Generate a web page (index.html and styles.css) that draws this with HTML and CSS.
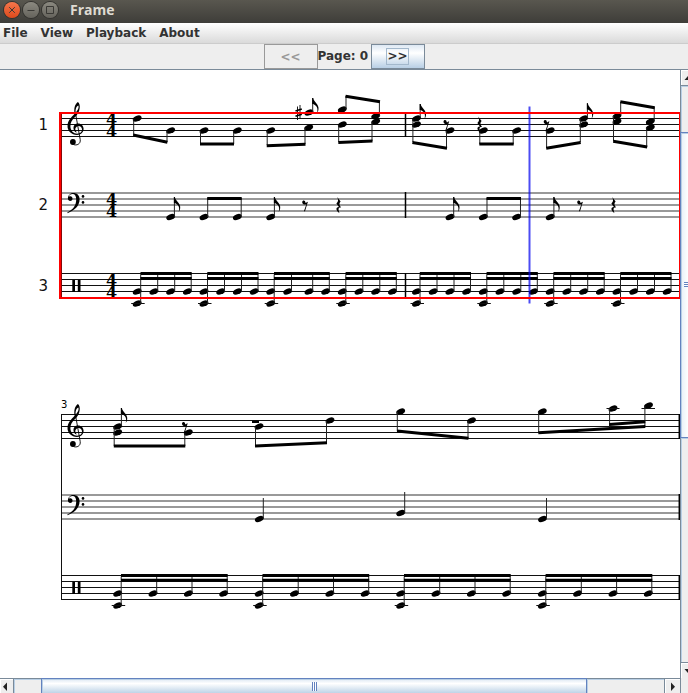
FILE: index.html
```html
<!DOCTYPE html>
<html lang="en">
<head>
<meta charset="utf-8">
<title>Frame</title>
<link rel="stylesheet" href="styles.css">
</head>
<body>
<header class="titlebar">
  <button class="win win-close" aria-label="Close"><svg viewBox="0 0 16 16"><path d="M5.200 5.200l5.600 5.600M10.800 5.200l-5.600 5.600"/></svg></button>
  <button class="win" aria-label="Minimize"><svg viewBox="0 0 16 16"><path d="M4.500 8.500h7"/></svg></button>
  <button class="win" aria-label="Maximize"><svg viewBox="0 0 16 16"><path d="M4.500 4.500h7v7h-7z"/></svg></button>
  <h1 class="title">Frame</h1>
</header>
<nav class="menubar">
  <button class="menu">File</button>
  <button class="menu">View</button>
  <button class="menu">Playback</button>
  <button class="menu">About</button>
</nav>
<div class="toolbar">
  <button class="page-btn" disabled>&lt;&lt;</button>
  <span class="page-label">Page: 0</span>
  <button class="page-btn page-btn-active"><span class="focus">&gt;&gt;</span></button>
</div>
<main class="scrollpane">
  <div class="viewport">
    <svg class="score" viewBox="0 70 680 608" width="680" height="608" role="img" aria-label="Score">
      <defs>
        <ellipse id="n" rx="4.600" ry="2.800" transform="rotate(-22)"/>
        <path id="flag" d="M-.5 0H.5C1 4 6.500 6.500 5.800 11C5.600 12.800 5.200 13.800 4.300 14.800C5.600 10.500 4 7.500 .5 6H-.5z"/>
        <path id="r8" d="M4.600 2.200L5.900 1.800L3 11.300L1.900 11.300L4.400 4.300C3.200 4.900 .2 4.800 .2 2.300C.2 -.2 3.600 -.1 3.300 2.600C4 3 4.400 2.800 4.600 2.200z"/>
        <path id="r4" d="M1.200 0L4.600 4.600C3 6.500 3 7.700 5 10.600C3 10 1.900 11 2.900 14.200L3.400 15.900C.2 14 -1 10 2.900 9.900L.4 6.500C2.500 4.500 2.400 3 1.200 0z"/>
        <g id="sharp" stroke="#000" fill="none">
          <path d="M2 1.500V15M4.500 0V13.500" stroke-width=".9"/>
          <path d="M0 6L6.300 4M0 11.300L6.300 9.300" stroke-width="1.700"/>
        </g>
        <g id="treble">
          <path d="M10.900 0C12.400 1.200 13 3.500 12.700 6C12.300 10.500 10 13 7.500 15.600C5 18.200 3.300 20.600 3.400 24.500C3.500 29 7 32.200 11.300 31.600C14 31.200 15.300 29 15 27C14.600 24.800 12.600 23.800 10.800 24.200C8.200 24.800 7.400 28 9.700 30L9.300 30.500C5.500 28.800 5.400 22.500 10 21.500C13.500 20.800 16.500 23.200 16.600 26.700C16.700 30.400 13.600 32.900 10 32.900C4.500 32.900 .3 29 .5 23.800C.7 18.800 4 15.600 7.600 11.800C6.800 7 7.500 2.500 10.900 0zM11.300 3.400C9.200 4.200 8.300 7.500 8.700 10.300C10.600 8.500 12.300 5.500 11.300 3.400z" fill-rule="evenodd"/>
          <path d="M8.300 10L13.200 37.500C14 42 9.500 44 6.300 42.400" fill="none" stroke="#000" stroke-width=".9"/>
          <circle cx="5.900" cy="40" r="2.900"/>
        </g>
        <g id="bass">
          <path d="M.9 5.500C.9 -1.800 12.600 -2 12.600 6.300C12.600 13 7.500 17.500 .5 20.200L.3 19.600C6 16.500 9.200 12.500 9.200 6.800C9.200 2.800 8 .9 5.600 .9C3.600 .9 2 2 1.700 3.700C4 2.600 5.600 3.800 5.500 5.700C5.300 8.800 .9 8.700 .9 5.500z"/>
          <circle cx="16" cy="3.400" r="1.300"/><circle cx="16" cy="9.400" r="1.300"/>
        </g>
        <path id="perc" d="M0 0h2.700v12h-2.700zM5.500 0h2.700v12h-2.700z"/>
        <g id="time" class="time"><text x="0" y="0">4</text><text x="0" y="12">4</text></g>
        <g id="staff"><path class="line" d="M61 .5H680M61 6.500H680M61 12.500H680M61 18.500H680M61 24.500H680"/></g>
        <g id="staff-soft"><path class="line-soft" d="M61 0H680M61 6H680M61 12H680M61 18H680M61 24H680"/></g>
        <g id="kick"><use href="#n"/><use href="#n" y="12"/><path class="line" d="M-6 12H7.500"/><path class="stem" d="M3.500 -17V12"/></g>
        <g id="drum4">
          <use href="#kick"/><use href="#n" x="16.700"/><use href="#n" x="33.400"/><use href="#n" x="50.200"/>
          <path class="stem" d="M20.500 -17V0M37.500 -17V0M54 -17V0"/>
          <path class="beam" d="M3.300 -18H54.500M3.300 -13H54.500"/>
        </g>
        <g id="drum4-wide">
          <use href="#kick"/><use href="#n" x="35.300"/><use href="#n" x="70.700"/><use href="#n" x="106"/>
          <path class="stem" d="M39 -17V0M74.300 -17V0M109.500 -17V0"/>
          <path class="beam" d="M3.300 -18H110M3.300 -13.300H110"/>
        </g>
        <g id="e8"><use href="#n"/><path class="stem" d="M3.700 -20V0"/><use href="#flag" x="3.700" y="-20"/></g>
        <g id="pair"><use href="#n"/><use href="#n" x="33.300"/><path class="stem" d="M3.700 -19V0M37.200 -19V0"/><path class="beam" d="M3.200 -18.500H37.700"/></g>
        <g id="q"><use href="#n"/><path class="stem" d="M4 -21V0"/></g>
      </defs>

      <!-- First system: staves, clefs, meter -->
      <use href="#staff" y="112"/><use href="#staff-soft" y="193"/><use href="#staff" y="273"/>
      <path class="bar" d="M405.500 112V137M405.500 192V218M405.500 273V298"/>
      <path class="line" d="M61.500 112V298M679.500 112V298"/>
      <use href="#treble" x="67" y="102"/><use href="#bass" x="67" y="193"/><use href="#perc" x="72.300" y="280"/>
      <use href="#time" x="106" y="125"/><use href="#time" x="106" y="205"/><use href="#time" x="106" y="286"/>
      <g class="label">
        <text x="48" y="130">1</text><text x="48" y="210">2</text><text x="48" y="291">3</text>
      </g>

      <!-- First system, staff 1 -->
      <use href="#n" x="137.200" y="118.500"/><use href="#n" x="170.700" y="130.500"/>
      <use href="#n" x="204" y="130.500"/><use href="#n" x="237.300" y="130.500"/>
      <use href="#n" x="270.700" y="130.500"/><use href="#n" x="308.700" y="127.500"/>
      <use href="#n" x="309" y="112.500"/><use href="#sharp" x="295.500" y="105"/>
      <use href="#n" x="342.300" y="109.500"/><use href="#n" x="342.300" y="124.500"/>
      <use href="#n" x="375.700" y="116"/><use href="#n" x="375.700" y="121.500"/>
      <use href="#n" x="416.500" y="118.500"/><use href="#n" x="416.500" y="124.500"/>
      <use href="#n" x="450" y="130.500"/><use href="#n" x="483.300" y="130.500"/>
      <use href="#n" x="516.700" y="130.500"/><use href="#n" x="550.200" y="130.500"/>
      <use href="#n" x="583.700" y="118.500"/><use href="#n" x="583.700" y="124.500"/>
      <use href="#n" x="617" y="116"/><use href="#n" x="617" y="121.500"/>
      <use href="#n" x="650.300" y="121.500"/><use href="#n" x="650.300" y="127.500"/>
      <path class="stem" d="M133.700 119V135M167 131V142M200.500 131V144M233.700 131V144M267.200 131V145M305 128V144M312.700 98V112M346 96V109M379.400 102V116M338.700 125V142M372 122V141M412.900 119V142M420.200 104V118M446.500 131V148M479.800 131V144M513.200 131V144M546.600 131V148M580.300 119V142M587.400 103V118M620.700 102V115M654.200 107V121M613.500 116V141M646.700 128V147"/>
      <path class="beam" d="M133.200 135L167.400 142.200M200 144H234M266.700 145.700L305.500 144.300M345.500 96.200L380 101.700M338.300 142.400L372.500 140.900M412.400 142.500L447 148.200M479.300 144H513.700M546.200 148.200L580.700 142.400M620.300 101.700L654.700 107.700M613.200 141.300L647.200 147"/>
      <use href="#flag" x="312.700" y="98"/><use href="#flag" x="420.200" y="104"/><use href="#flag" x="587.400" y="103.500"/>
      <use href="#r8" x="443.300" y="119.500"/><use href="#r4" x="477" y="116.500"/><use href="#r8" x="543.500" y="119.500"/>

      <!-- First system, staff 2 -->
      <use href="#e8" x="170.700" y="217"/><use href="#pair" x="204" y="217"/><use href="#e8" x="270.700" y="217"/>
      <use href="#r8" x="302" y="200"/><use href="#r4" x="336" y="197"/>
      <use href="#e8" x="450" y="217"/><use href="#pair" x="483.300" y="217"/><use href="#e8" x="550.200" y="217"/>
      <use href="#r8" x="577" y="200"/><use href="#r4" x="611" y="197"/>

      <!-- First system, staff 3 -->
      <use href="#drum4" x="137.200" y="291.500"/><use href="#drum4" x="204" y="291.500"/>
      <use href="#kick" x="270.700" y="291.500"/><use href="#n" x="287.700" y="291.500"/><use href="#n" x="309" y="291.500"/><use href="#n" x="325.700" y="291.500"/>
      <path class="stem" d="M291.500 274V291M312.700 274V291M329.300 274V291"/>
      <path class="beam" d="M274 273.500H329.800M274 278.500H329.800"/>
      <use href="#drum4" x="342.300" y="291.500"/><use href="#drum4" x="416.500" y="291.500"/>
      <use href="#drum4" x="483.300" y="291.500"/><use href="#drum4" x="550.200" y="291.500"/><use href="#drum4" x="617" y="291.500"/>

      <!-- Playback cursor and selected system -->
      <path class="cursor" d="M529.500 106.500V303.500"/>
      <path class="selection" d="M60 113H680V298H60z"/>
      <path class="selection" d="M60.500 112V299"/>

      <!-- Second system -->
      <use href="#staff" y="414"/><use href="#staff-soft" y="495"/><use href="#staff" y="575"/>
      <path class="line" d="M61.500 414V600"/>
      <path class="bar" d="M679.300 414V439M679.300 494V520M679.300 575V600"/>
      <text class="bar-number" x="61" y="408">3</text>
      <use href="#treble" x="67" y="404"/><use href="#bass" x="67" y="495"/><use href="#perc" x="72.300" y="582"/>
      <use href="#n" x="117.700" y="426.500"/><use href="#n" x="117.700" y="432.500"/><use href="#n" x="188.300" y="432.500"/>
      <use href="#n" x="259" y="426.500"/><use href="#n" x="330" y="420.500"/>
      <use href="#n" x="400.700" y="411.500"/><use href="#n" x="471.500" y="420.500"/>
      <use href="#n" x="542.300" y="411.500"/><use href="#n" x="613" y="408.500"/><use href="#n" x="648.500" y="405.500"/>
      <path class="line" d="M606.500 408.500H619.500M641.500 408.500H655"/>
      <path class="stem" d="M114.200 427V446M121.400 408V426M184.800 433V446M255.500 427V446M326.500 421V443M397.300 412V431M468 421V438M538.700 412V433M609.600 409V428M644.900 406V427"/>
      <path class="beam" d="M113.800 446H185.300M255 446L327 442.700M397 431L468.500 438.200M538.300 432.700L645.300 426.500M609.200 424.400L645.300 421.700"/>
      <use href="#flag" x="121.400" y="408"/><use href="#r8" x="181.800" y="421.500"/>
      <rect x="252" y="420.500" width="7" height="2.500"/>
      <use href="#q" x="259.300" y="519"/><use href="#q" x="400.700" y="513"/><use href="#q" x="542.500" y="519"/>
      <use href="#drum4-wide" x="117.700" y="593.500"/><use href="#drum4-wide" x="259.200" y="593.500"/>
      <use href="#drum4-wide" x="400.700" y="593.500"/><use href="#drum4-wide" x="542.300" y="593.500"/>
    </svg>
  </div>
  <div class="vbar">
    <button class="arrow arrow-up" aria-label="Scroll up"><svg viewBox="0 0 16 16"><path d="M8 5L12.500 10H3.500z"/></svg></button>
    <div class="track">
      <div class="gap gap-top"></div>
      <div class="thumb"><span class="grip"></span></div>
      <div class="gap gap-bottom"></div>
    </div>
    <button class="arrow arrow-down" aria-label="Scroll down"><svg viewBox="0 0 16 16"><path d="M3.500 6H12.500L8 11z"/></svg></button>
  </div>
  <div class="hbar">
    <button class="arrow arrow-left" aria-label="Scroll left"><svg viewBox="0 0 16 16"><path d="M10 3.500V12L6 7.800z"/></svg></button>
    <div class="track">
      <div class="gap gap-left"></div>
      <div class="thumb"><span class="grip"></span></div>
      <div class="gap gap-right"></div>
    </div>
    <button class="arrow arrow-right" aria-label="Scroll right"><svg viewBox="0 0 16 16"><path d="M6 3.500V12L10 7.800z"/></svg></button>
  </div>
  <div class="corner"></div>
</main>
</body>
</html>
```
FILE: styles.css
```css
* { box-sizing: border-box; }

body {
  margin: 0;
  height: 100vh;
  display: flex;
  flex-direction: column;
  overflow: hidden;
  background: #eee;
  color: #333;
  font: bold 12px/16px "DejaVu Sans", sans-serif;
}

button {
  margin: 0;
  padding: 0;
  border: 0;
  background: none;
  color: inherit;
  font: inherit;
}

/* Title bar */
.titlebar {
  flex: none;
  height: 23px;
  padding: 0 0 3px 4px;
  display: flex;
  align-items: center;
  gap: 3px;
  background: linear-gradient(#59574f, #3e3d39);
}
.win {
  width: 16px;
  height: 16px;
  border-radius: 50%;
  background: linear-gradient(#8b8980, #65635c);
  box-shadow: 0 0 0 1px #33322e;
}
.win-close { background: linear-gradient(#f5764c, #dd4a1c); }
.win svg {
  display: block;
  fill: none;
  stroke: #3a3935;
  stroke-width: 1;
}
.title {
  margin: 0 0 0 9px;
  color: #dfdbd2;
  font: bold 14px/20px "Open Sans", sans-serif;
}

/* Menus */
.menubar {
  flex: none;
  height: 21px;
  padding: 0 0 1px 3px;
  display: flex;
  align-items: center;
  gap: 13px;
  border-bottom: 1px solid #ccc;
  background: linear-gradient(#fff, #dadada);
}

/* Page switcher */
.toolbar {
  flex: none;
  height: 26px;
  display: flex;
  justify-content: center;
  border-bottom: 1px solid #7a8a99;
}
.page-btn {
  width: 54px;
  height: 25px;
  border: 1px solid #999;
  color: #999;
}
.page-btn-active {
  border-color: #7a8a99;
  color: #333;
  background: linear-gradient(#dde8f3, #fff 35%, #b8cfe5);
}
.focus {
  display: inline-block;
  border: 1px solid #a3b8cc;
  line-height: 15px;
}
.page-label {
  min-width: 53px;
  line-height: 25px;
}

/* Scroll pane */
.scrollpane {
  flex: 1;
  min-height: 0;
  display: grid;
  grid-template: minmax(0, 1fr) 15px / minmax(0, 1fr) 8px;
}
.viewport {
  overflow: hidden;
  background: #fff;
}
.vbar, .hbar {
  display: flex;
  overflow: hidden;
}
.vbar { flex-direction: column; }
.track {
  flex: 1;
  display: flex;
}
.vbar .track { flex-direction: column; width: 17px; }
.gap {
  border: 0 solid #7a8a99;
  box-shadow: inset 1px 1px #b8cfe5;
}
.vbar .gap { border-left-width: 1px; }
.hbar .gap { border-top-width: 1px; }
.gap-top { flex: 46; }
.vbar .thumb { flex: 305; }
.gap-bottom { flex: 225; }
.gap-left { flex: 27; }
.hbar .thumb { flex: 546; }
.gap-right { flex: 77; }
.thumb {
  display: flex;
  align-items: center;
  justify-content: center;
  border: 1px solid #6382bf;
  box-shadow: inset 1px 1px #b8cfe5;
}
.vbar .thumb { background: linear-gradient(90deg, #e8f0f8, #fff 50%, #b8cfe5); }
.hbar .thumb {
  height: 17px;
  background: linear-gradient(#dde8f3, #fff 30%, #b8cfe5);
}
.hbar .grip {
  width: 5px;
  height: 9px;
  background: repeating-linear-gradient(90deg, #6382bf 0 1px, #fff 1px 2px);
}
.vbar .grip {
  width: 9px;
  height: 5px;
  background: repeating-linear-gradient(#6382bf 0 1px, #fff 1px 2px);
}
.arrow {
  flex: none;
  width: 17px;
  height: 16px;
  border: 0 solid #7a8a99;
  background: #eee;
  box-shadow: inset 1px 1px #fff;
}
.arrow svg {
  display: block;
  width: 16px;
  height: 16px;
  fill: #222;
}
.arrow-up { border-width: 0 0 1px 1px; }
.arrow-down { border-width: 1px 0 0 1px; }
.arrow-left { width: 14px; border-width: 1px 1px 0 0; }
.arrow-left svg { margin-left: -3px; }
.arrow-right { width: 16px; border-width: 1px 0 0 1px; }
.corner { border-left: 1px solid #7a8a99; }

/* Score drawing */
.score { display: block; }
.line { fill: none; stroke: #111; stroke-width: 1; }
.line-soft { fill: none; stroke: #999; stroke-width: 2; }
.stem { fill: none; stroke: #222; stroke-width: 1; }
.beam { fill: none; stroke: #000; stroke-width: 3; }
.bar { fill: none; stroke: #000; stroke-width: 1.500; }
.selection { fill: none; stroke: #f00; stroke-width: 2; }
.cursor { fill: none; stroke: #00e; stroke-width: 2; opacity: .7; }
.label { font: 15px "DejaVu Sans", sans-serif; text-anchor: end; fill: #111; }
.bar-number { font: 10px "DejaVu Sans", sans-serif; fill: #000; }
.time { font: bold 16px "DejaVu Serif", serif; fill: #000; }
```
